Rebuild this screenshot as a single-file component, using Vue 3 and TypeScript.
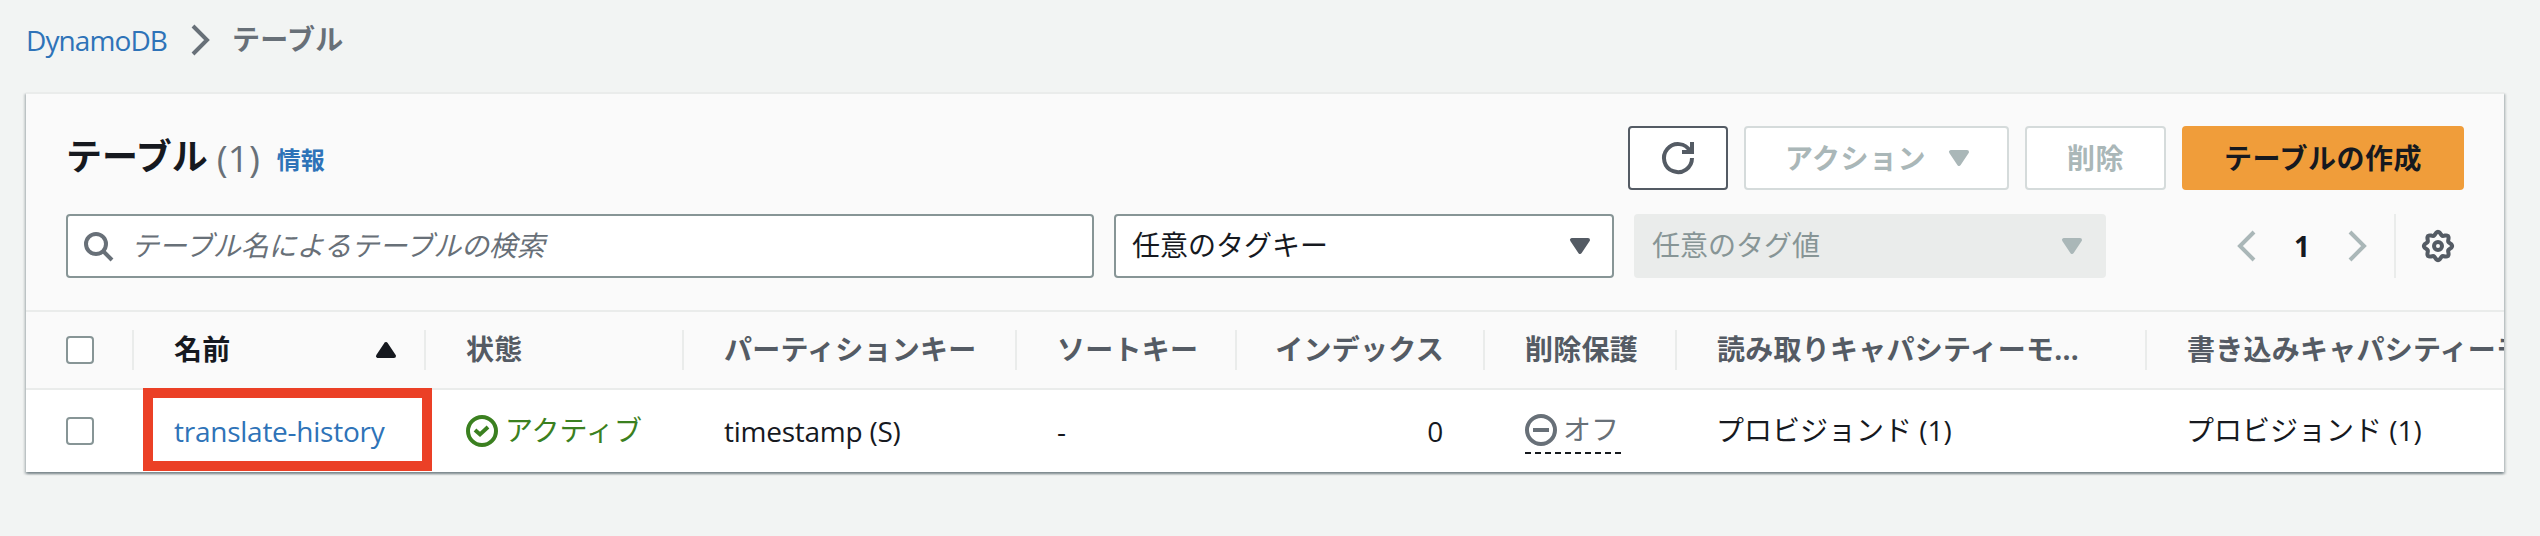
<script setup lang="ts">
interface Column {
  label: string
  active?: boolean
  align?: 'right'
}

const columns: Column[] = [
  { label: '名前', active: true },
  { label: '状態' },
  { label: 'パーティションキー' },
  { label: 'ソートキー' },
  { label: 'インデックス', align: 'right' },
  { label: '削除保護' },
  { label: '読み取りキャパシティーモ...' },
  { label: '書き込みキャパシティーモード' },
]

// Eight-lobed outline of the settings gear, in 16-unit icon space.
const gearPath: string = Array.from({ length: 96 }, (_, i) => {
  const a = (i / 96) * Math.PI * 2
  const r = 6.3 + 0.75 * Math.cos(8 * a)
  const x = (8 + r * Math.sin(a)).toFixed(2)
  const y = (8 - r * Math.cos(a)).toFixed(2)
  return `${i === 0 ? 'M' : 'L'}${x} ${y}`
}).join('') + 'Z'
</script>

<template>
  <div class="page">
    <nav class="crumbs">
      <a class="link crumb-root">DynamoDB</a>
      <svg class="icon crumb-sep" viewBox="0 0 16 16"><path d="M5 1l7 7-7 7" /></svg>
      <span class="crumb-current">テーブル</span>
    </nav>

    <section class="card">
      <header class="head">
        <div class="title-row">
          <h1 class="title">テーブル</h1>
          <span class="count">(1)</span>
          <a class="link info">情報</a>
          <div class="actions">
            <button class="btn btn-refresh">
              <svg class="icon" viewBox="0 0 16 16">
                <path d="M10 5h5V0" />
                <path d="M15 8a7 7 0 1 1-.9-3.4" />
              </svg>
            </button>
            <button class="btn btn-off btn-menu">
              <span>アクション</span>
              <svg class="icon caret" viewBox="0 0 16 16"><path d="M4 5h8l-4 6z" /></svg>
            </button>
            <button class="btn btn-off btn-delete"><span>削除</span></button>
            <button class="btn btn-primary"><span>テーブルの作成</span></button>
          </div>
        </div>

        <div class="filters">
          <div class="field search">
            <svg class="icon" viewBox="0 0 16 16">
              <circle cx="7" cy="7" r="5" />
              <path d="M15 15l-4.5-4.5" />
            </svg>
            <span class="placeholder">テーブル名によるテーブルの検索</span>
          </div>
          <div class="field select tag-key">
            <span>任意のタグキー</span>
            <svg class="icon caret" viewBox="0 0 16 16"><path d="M4 5h8l-4 6z" /></svg>
          </div>
          <div class="field select tag-value">
            <span>任意のタグ値</span>
            <svg class="icon caret" viewBox="0 0 16 16"><path d="M4 5h8l-4 6z" /></svg>
          </div>
          <div class="pager">
            <svg class="icon" viewBox="0 0 16 16"><path d="M11 1L4 8l7 7" /></svg>
            <span class="page-no">1</span>
            <svg class="icon" viewBox="0 0 16 16"><path d="M5 1l7 7-7 7" /></svg>
          </div>
          <div class="settings">
            <svg class="icon" viewBox="0 0 16 16">
              <path :d="gearPath" />
              <circle cx="8" cy="8" r="2" />
            </svg>
          </div>
        </div>
      </header>

      <div class="row row-head">
        <div class="cell check"><span class="box"></span></div>
        <div
          v-for="c in columns"
          :key="c.label"
          class="cell"
          :class="{ active: c.active, right: c.align === 'right' }"
        >
          <span class="label">{{ c.label }}</span>
          <svg v-if="c.active" class="icon caret sort" viewBox="0 0 16 16"><path d="M4 11h8L8 5z" /></svg>
        </div>
      </div>

      <div class="row row-body">
        <div class="cell check"><span class="box"></span></div>
        <div class="cell name">
          <a class="link latin">translate-history</a>
          <span class="highlight"></span>
        </div>
        <div class="cell status-on">
          <svg class="icon" viewBox="0 0 16 16">
            <circle cx="8" cy="8" r="7" />
            <path d="M4.5 7.5L7 9.7l4-3.7" />
          </svg>
          <span class="label">アクティブ</span>
        </div>
        <div class="cell"><span class="latin">timestamp (S)</span></div>
        <div class="cell"><span class="latin">-</span></div>
        <div class="cell right"><span class="latin">0</span></div>
        <div class="cell">
          <span class="status-off">
            <svg class="icon" viewBox="0 0 16 16">
              <circle cx="8" cy="8" r="7" />
              <path d="M4 8h8" />
            </svg>
            <span class="label">オフ</span>
          </span>
        </div>
        <div class="cell"><span class="label">プロビジョンド <span class="num">(1)</span></span></div>
        <div class="cell"><span class="label">プロビジョンド <span class="num">(1)</span></span></div>
      </div>
    </section>
  </div>
</template>

<style>
html,
body {
  margin: 0;
  background: #f2f4f3;
}
</style>

<style scoped>
.page {
  box-sizing: border-box;
  width: 2540px;
  height: 536px;
  padding: 0 36px 0 26px;
  overflow: hidden;
  background: #f2f4f3;
  color: #16191f;
  font-family: "Open Sans", "Noto Sans CJK JP", sans-serif;
  font-size: 28px;
  line-height: 44px;
  white-space: nowrap;
}

.page * {
  box-sizing: border-box;
}

.icon {
  display: block;
  flex: none;
  width: 32px;
  height: 32px;
  overflow: visible;
  fill: none;
  stroke: currentColor;
  stroke-width: 2;
}

.caret {
  fill: currentColor;
  stroke-linejoin: round;
}

.link {
  color: #2e73b8;
}

.latin,
.num {
  font-weight: 500;
}

.latin {
  margin-bottom: 1px;
  letter-spacing: -0.25px;
}

.label {
  margin-bottom: 2px;
}

.crumbs {
  display: flex;
  align-items: center;
  height: 92px;
  padding-bottom: 12px;
  color: #687078;
}

.crumb-root {
  width: 157px;
  font-weight: 500;
  letter-spacing: -0.9px;
}

.crumb-current {
  margin: 0 0 2px 17px;
  font-weight: 700;
  letter-spacing: 0.3px;
}

.card {
  height: 380px;
  border-top: 2px solid #eaeceb;
  background: #fff;
  box-shadow:
    0 2px 2px 0 rgba(0, 28, 36, 0.3),
    2px 2px 2px 0 rgba(0, 28, 36, 0.15),
    -2px 2px 2px 0 rgba(0, 28, 36, 0.15);
}

.head {
  height: 218px;
  padding: 32px 40px 0;
  border-bottom: 2px solid #eaeceb;
  background: #fafafa;
}

.title-row {
  display: flex;
  align-items: center;
  height: 64px;
}

.title {
  margin: 0 0 3px;
  font-size: 36px;
  font-weight: 700;
}

.count {
  margin: 0 0 1px 9px;
  color: #687078;
  font-size: 37px;
}

.info {
  margin: 3px 0 0 17px;
  font-size: 24px;
  font-weight: 700;
}

.actions {
  display: flex;
  gap: 16px;
  margin-left: auto;
}

.btn {
  display: flex;
  align-items: center;
  justify-content: center;
  height: 64px;
  padding: 0;
  border: 2px solid #545b64;
  border-radius: 4px;
  background: #fff;
  color: #545b64;
  font: inherit;
  font-weight: 700;
  letter-spacing: 0.5px;
}

.btn span {
  margin-bottom: 1px;
}

.btn-refresh {
  width: 100px;
}

.btn-off {
  border-color: #d5dbdb;
  color: #aab7b8;
}

.btn-menu {
  gap: 17px;
  width: 265px;
  padding-left: 7px;
}

.btn-delete {
  width: 141px;
}

.btn-primary {
  width: 282px;
  border-color: #f09d3a;
  background: #f09d3a;
  color: #16191f;
}

.filters {
  display: flex;
  margin-top: 24px;
  height: 64px;
}

.field {
  display: flex;
  align-items: center;
  height: 64px;
  border: 2px solid #879596;
  border-radius: 4px;
  background: #fff;
}

.field span {
  margin-bottom: 2px;
}

.search {
  width: 1028px;
  padding-left: 14px;
  color: #687078;
}

.search .placeholder {
  margin-left: 17px;
  font-style: italic;
  letter-spacing: -0.15px;
}

.select {
  justify-content: space-between;
  padding: 0 16px;
}

.select .icon {
  color: #545b64;
}

.tag-key {
  width: 500px;
  margin-left: 20px;
}

.tag-value {
  width: 472px;
  margin-left: 20px;
  border-color: #eaeceb;
  background: #eaeceb;
  color: #879596;
}

.tag-value .icon {
  color: #aab7b8;
}

.pager {
  display: flex;
  align-items: center;
  margin-left: 126px;
  color: #aab7b8;
}

.page-no {
  width: 76px;
  color: #16191f;
  font-weight: 700;
  text-align: center;
}

.settings {
  display: flex;
  align-items: center;
  margin-left: 22px;
  padding-left: 26px;
  border-left: 2px solid #eaeceb;
  color: #545b64;
}

.row {
  display: grid;
  grid-template-columns: 108px 292px 258px 333px 220px 248px 192px 470px 357px;
  overflow: hidden;
}

.cell {
  display: flex;
  align-items: center;
  min-width: 0;
  padding-left: 40px;
}

.right {
  justify-content: flex-end;
  padding-right: 42px;
}

.box {
  width: 28px;
  height: 28px;
  border: 2px solid #879596;
  border-radius: 4px;
  background: #fff;
}

.row-head {
  height: 78px;
  border-bottom: 2px solid #eaeceb;
  background: #fafafa;
  color: #545b64;
  font-weight: 700;
  letter-spacing: 0.25px;
}

.row-head .cell {
  height: 40px;
  margin-top: 18px;
  border-right: 2px solid #eaeceb;
}

.row-head .right {
  padding-right: 39px;
}

.row-head .cell:last-child {
  border-right: 0;
}

.row-head .active {
  color: #16191f;
}

.sort {
  margin: 0 22px 0 auto;
}

.row-body {
  height: 82px;
  overflow: visible;
}

.row-body .cell > .label {
  margin-left: -1px;
}

.name {
  position: relative;
}

/* Marker frame around the table name */
.highlight {
  position: absolute;
  left: 9px;
  top: -2px;
  width: 289px;
  height: 83px;
  border: 10px solid #eb4026;
}

.status-on {
  gap: 8px;
  color: #3b8020;
}

.status-off {
  display: flex;
  align-items: center;
  gap: 6px;
  width: 96px;
  height: 46px;
  border-bottom: 2px dashed #16191f;
  color: #687078;
}
</style>
